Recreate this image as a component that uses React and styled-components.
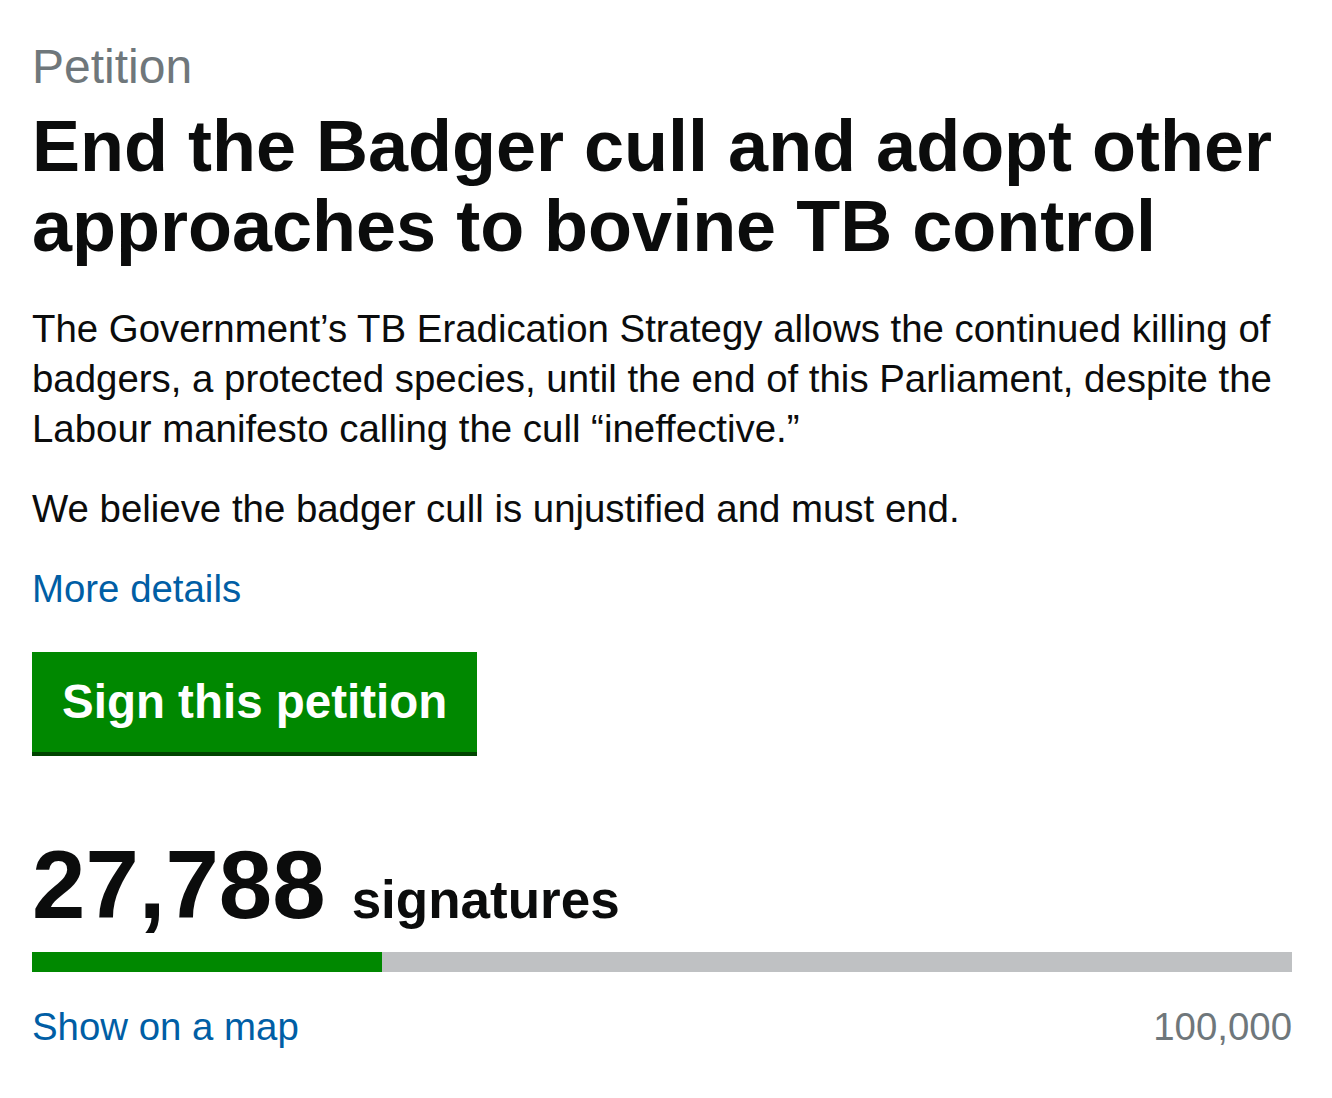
import React from 'react';
import styled, { createGlobalStyle } from 'styled-components';

const GlobalStyle = createGlobalStyle`
  body {
    margin: 0;
    background: #fff;
    color: #0b0c0c;
    font-family: "Liberation Sans", Arial, Helvetica, sans-serif;
    -webkit-font-smoothing: antialiased;
  }
`;

const petition = {
  title: 'End the Badger cull and adopt other approaches to bovine TB control',
  summary: [
    'The Government’s TB Eradication Strategy allows the continued killing of badgers, a protected species, until the end of this Parliament, despite the Labour manifesto calling the cull “ineffective.”',
    'We believe the badger cull is unjustified and must end.',
  ],
  signatures: 27788,
  threshold: 100000,
};

const App = () => {
  const { title, summary, signatures, threshold } = petition;
  const percent = Math.min(100, (signatures / threshold) * 100);

  return (
    <>
      <GlobalStyle />
      <Page>
        <Caption>Petition</Caption>
        <Title>{title}</Title>

        <Summary>
          {summary.map(text => (
            <Paragraph key={text}>{text}</Paragraph>
          ))}
          <Paragraph>
            <Link href="#details">More details</Link>
          </Paragraph>
        </Summary>

        <SignButton href="#sign">Sign this petition</SignButton>

        <Count>
          <Number>{signatures.toLocaleString('en-GB')}</Number>
          <Label>signatures</Label>
        </Count>

        <Progress>
          <ProgressFill style={{ width: `${percent}%` }} />
        </Progress>

        <Footer>
          <Link href="#map">Show on a map</Link>
          <Goal>{threshold.toLocaleString('en-GB')}</Goal>
        </Footer>
      </Page>
    </>
  );
};

export default App;

const Page = styled.main`
  box-sizing: border-box;
  padding: 37px 40px 40px 32px;
`;

const Caption = styled.p`
  margin: 0;
  font-size: 48px;
  line-height: 60px;
  color: #6f777b;
`;

const Title = styled.h1`
  margin: 9px 0 0;
  font-size: 72px;
  line-height: 80px;
  font-weight: 700;
  color: #0b0c0c;
`;

const Summary = styled.div`
  margin-top: 38px;
`;

const Paragraph = styled.p`
  margin: 0 0 30px;
  font-size: 38.4px;
  line-height: 50px;
  &:last-child {
    margin-bottom: 0;
  }
`;

const Link = styled.a`
  color: #005ea5;
  text-decoration: none;
  font-size: 38.4px;
  line-height: 50px;
`;

const SignButton = styled.a`
  display: block;
  width: max-content;
  margin-top: 38px;
  padding: 20px 30px;
  background: #008800;
  box-shadow: 0 4px 0 #004400;
  color: #fff;
  font-size: 47.5px;
  line-height: 60px;
  font-weight: 700;
  text-decoration: none;
`;

const Count = styled.div`
  display: flex;
  align-items: baseline;
  gap: 26px;
  margin-top: 83px;
  font-weight: 700;
`;

const Number = styled.span`
  font-size: 96px;
  line-height: 100px;
`;

const Label = styled.span`
  font-size: 53px;
  line-height: 60px;
`;

const Progress = styled.div`
  height: 20px;
  margin-top: 17px;
  background: #bfc1c3;
`;

const ProgressFill = styled.div`
  height: 100%;
  background: #008800;
`;

const Footer = styled.div`
  display: flex;
  justify-content: space-between;
  align-items: baseline;
  margin-top: 30px;
  font-size: 38.4px;
  line-height: 50px;
`;

const Goal = styled.span`
  color: #6f777b;
`;
